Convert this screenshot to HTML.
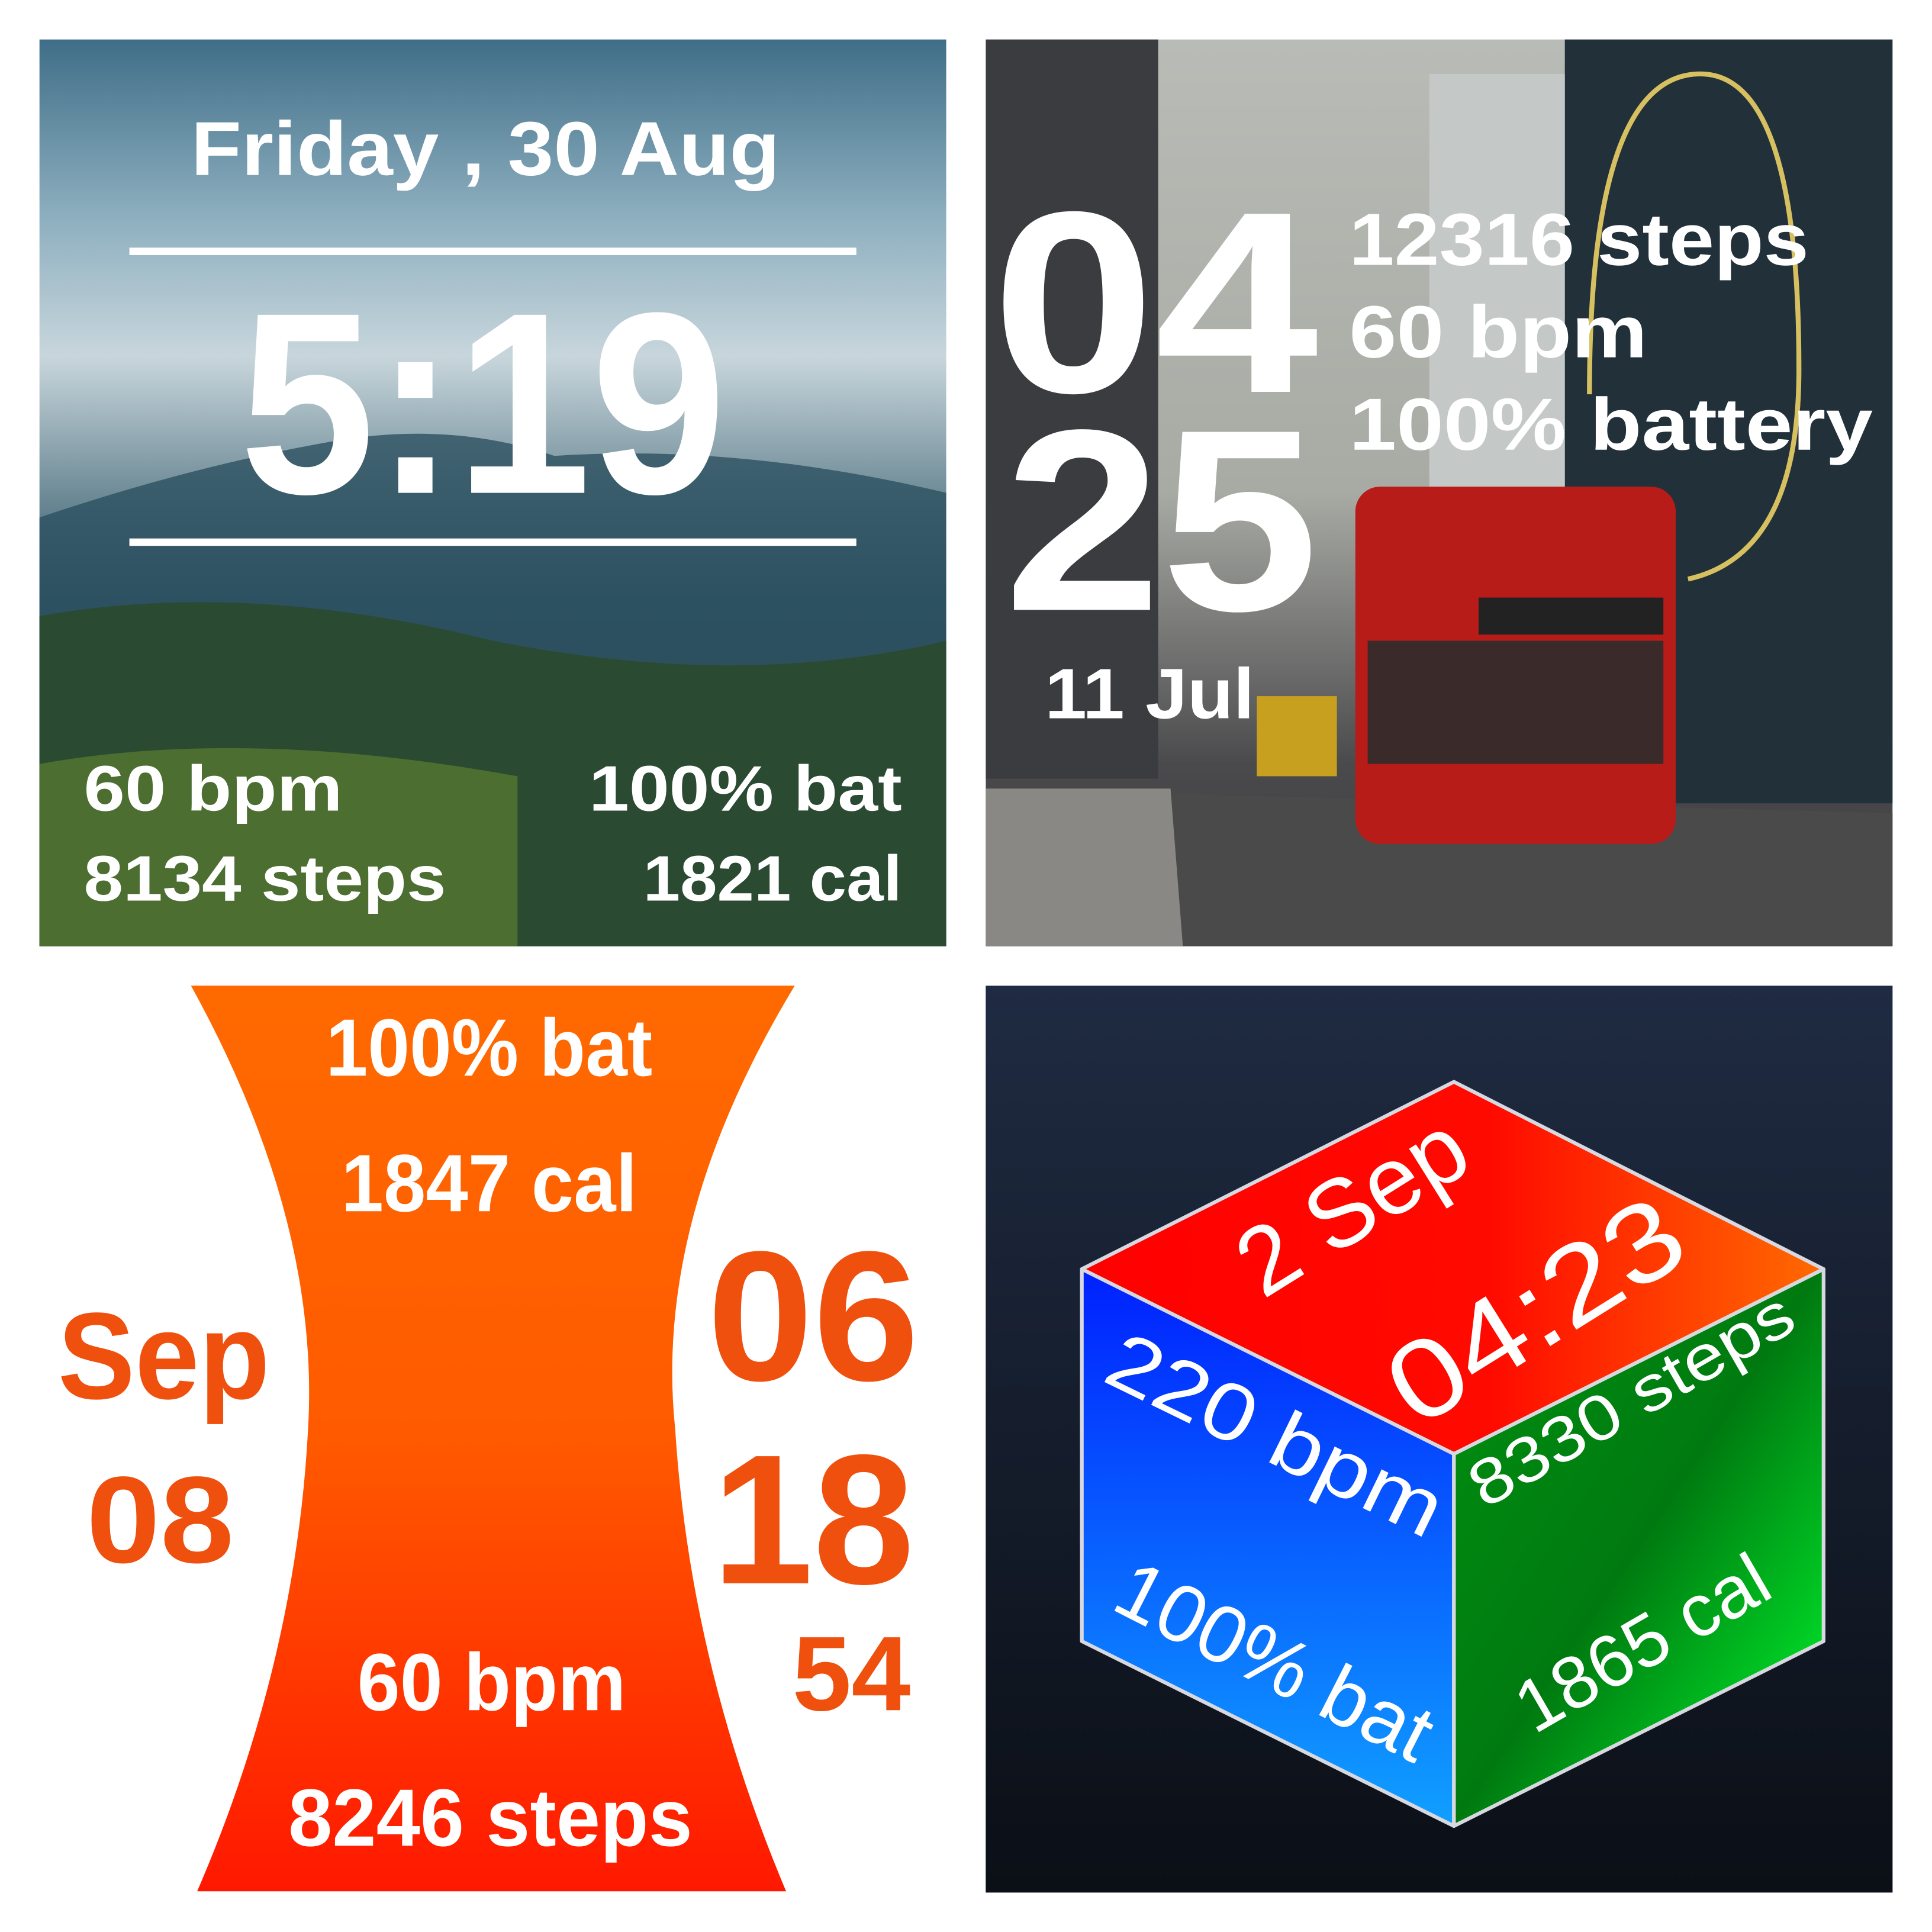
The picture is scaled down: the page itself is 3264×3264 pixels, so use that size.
<!DOCTYPE html>
<html><head><meta charset="utf-8"><style>
html,body{margin:0;padding:0;background:#fff;width:3264px;height:3264px;overflow:hidden}
svg{display:block}
text{font-family:"Liberation Sans","DejaVu Sans",sans-serif;}
</style></head><body>
<svg width="3264" height="3264" viewBox="0 0 1568 1568" xmlns="http://www.w3.org/2000/svg">
<defs>
<linearGradient id="sky" x1="0" y1="0" x2="0" y2="1">
<stop offset="0" stop-color="#3f6e88"/><stop offset="0.2" stop-color="#8fb0c0"/><stop offset="0.35" stop-color="#c8d6dc"/><stop offset="0.5" stop-color="#6f8c98"/><stop offset="0.62" stop-color="#2f5566"/><stop offset="0.8" stop-color="#2c4a3c"/><stop offset="1" stop-color="#2a4226"/></linearGradient>
<linearGradient id="street" x1="0" y1="0" x2="0" y2="1">
<stop offset="0" stop-color="#b9bcb6"/><stop offset="0.5" stop-color="#a8aaa4"/><stop offset="0.8" stop-color="#4a4a4c"/><stop offset="1" stop-color="#3a3a3c"/></linearGradient>
<linearGradient id="hg" x1="0" y1="0" x2="0" y2="1">
<stop offset="0" stop-color="#ff6a00"/><stop offset="0.5" stop-color="#ff5a00"/><stop offset="1" stop-color="#ff1800"/></linearGradient>
<linearGradient id="navy" x1="0" y1="0" x2="0" y2="1">
<stop offset="0" stop-color="#1f2b42"/><stop offset="1" stop-color="#0b0f16"/></linearGradient>
<linearGradient id="topf" x1="0" y1="0" x2="1" y2="0">
<stop offset="0" stop-color="#ff0000"/><stop offset="0.55" stop-color="#ff0a00"/><stop offset="1" stop-color="#ff6a00"/></linearGradient>
<linearGradient id="leftf" x1="0" y1="0" x2="0" y2="1">
<stop offset="0" stop-color="#0020ff"/><stop offset="1" stop-color="#10a0ff"/></linearGradient>
<linearGradient id="rightf" x1="0" y1="0" x2="1" y2="1">
<stop offset="0" stop-color="#009010"/><stop offset="0.5" stop-color="#007a10"/><stop offset="1" stop-color="#00ff30"/></linearGradient>
<clipPath id="c1"><rect x="32" y="32" width="736" height="736"/></clipPath>
<clipPath id="c2"><rect x="800" y="32" width="736" height="736"/></clipPath>
</defs>

<!-- TL -->
<g clip-path="url(#c1)">
<rect x="32" y="32" width="736" height="736" fill="url(#sky)"/>
<path d="M32 420 Q150 380 260 360 Q360 340 450 370 Q600 360 768 400 L768 768 L32 768Z" fill="#2c5060" opacity="0.8"/>
<path d="M32 500 Q200 470 400 520 Q600 560 768 520 L768 768 L32 768Z" fill="#2b4a32"/>
<path d="M32 620 Q200 590 420 630 L420 768 L32 768Z" fill="#4c6e30"/>
</g>
<g fill="#fff">
<text x="155" y="142" font-size="62" font-weight="bold" textLength="478" lengthAdjust="spacingAndGlyphs">Friday , 30 Aug</text>
<rect x="105" y="201" width="590" height="6"/>
<rect x="105" y="437" width="590" height="6"/>
<text x="392" y="400" font-size="210" font-weight="bold" text-anchor="middle" textLength="395" lengthAdjust="spacingAndGlyphs">5:19</text>
<text x="68" y="658" font-size="52" font-weight="bold" textLength="210" lengthAdjust="spacingAndGlyphs">60 bpm</text>
<text x="68" y="731" font-size="52" font-weight="bold" textLength="294" lengthAdjust="spacingAndGlyphs">8134 steps</text>
<text x="478" y="658" font-size="52" font-weight="bold" textLength="254" lengthAdjust="spacingAndGlyphs">100% bat</text>
<text x="522" y="731" font-size="52" font-weight="bold" textLength="210" lengthAdjust="spacingAndGlyphs">1821 cal</text>
</g>

<!-- TR -->
<g clip-path="url(#c2)">
<rect x="800" y="32" width="736" height="736" fill="url(#street)"/>
<rect x="800" y="32" width="140" height="600" fill="#3a3c40"/>
<rect x="1270" y="32" width="266" height="620" fill="#22303a"/>
<rect x="1160" y="60" width="110" height="380" fill="#c4c8c6"/>
<path d="M800 640 L1536 660 L1536 768 L800 768Z" fill="#4a4a4a"/>
<path d="M800 640 L950 640 L960 768 L800 768Z" fill="#8a8884"/>
<rect x="1100" y="395" width="260" height="290" rx="20" fill="#b81c18"/>
<rect x="1110" y="520" width="240" height="100" fill="#3a2a2a"/>
<rect x="1200" y="485" width="150" height="30" fill="#222"/>
<rect x="1020" y="565" width="65" height="65" fill="#c8a020"/>
<path d="M1290 320 Q1290 60 1380 60 Q1460 60 1460 300 Q1460 450 1370 470" fill="none" stroke="#d6c060" stroke-width="4"/>
</g>
<g fill="#fff" font-weight="bold">
<text x="805" y="318" font-size="210" textLength="265" lengthAdjust="spacingAndGlyphs">04</text>
<text x="815" y="495" font-size="210" textLength="255" lengthAdjust="spacingAndGlyphs">25</text>
<text x="1095" y="215" font-size="60" textLength="373" lengthAdjust="spacingAndGlyphs">12316 steps</text>
<text x="1095" y="290" font-size="60" textLength="242" lengthAdjust="spacingAndGlyphs">60 bpm</text>
<text x="1095" y="365" font-size="60" textLength="425" lengthAdjust="spacingAndGlyphs">100% battery</text>
<text x="848" y="583" font-size="58" textLength="170" lengthAdjust="spacingAndGlyphs">11 Jul</text>
</g>

<!-- BL -->
<path d="M155 800 L645 800 Q530 990 548 1160 Q560 1350 638 1535 L160 1535 Q240 1350 250 1160 Q260 990 155 800Z" fill="url(#hg)"/>
<g fill="#fff" font-weight="bold" text-anchor="middle">
<text x="397" y="873" font-size="66" textLength="265" lengthAdjust="spacingAndGlyphs">100% bat</text>
<text x="397" y="983" font-size="66" textLength="240" lengthAdjust="spacingAndGlyphs">1847 cal</text>
<text x="399" y="1388" font-size="66" textLength="218" lengthAdjust="spacingAndGlyphs">60 bpm</text>
<text x="398" y="1498" font-size="66" textLength="328" lengthAdjust="spacingAndGlyphs">8246 steps</text>
</g>
<g fill="#f0500e" font-weight="bold">
<text x="47" y="1135" font-size="100" textLength="172" lengthAdjust="spacingAndGlyphs">Sep</text>
<text x="70" y="1268" font-size="100" textLength="120" lengthAdjust="spacingAndGlyphs">08</text>
<text x="574" y="1120" font-size="150" textLength="172" lengthAdjust="spacingAndGlyphs">06</text>
<text x="578" y="1285" font-size="150" textLength="164" lengthAdjust="spacingAndGlyphs">18</text>
<text x="643" y="1388" font-size="86" textLength="96" lengthAdjust="spacingAndGlyphs">54</text>
</g>

<!-- BR -->
<rect x="800" y="800" width="736" height="736" fill="url(#navy)"/>
<g stroke="#d8d8e0" stroke-width="3" stroke-linejoin="round">
<path d="M1180 878 L1480 1030 L1180 1180 L878 1030Z" fill="url(#topf)"/>
<path d="M878 1030 L1180 1180 L1180 1482 L878 1332Z" fill="url(#leftf)"/>
<path d="M1180 1180 L1480 1030 L1480 1332 L1180 1482Z" fill="url(#rightf)"/>
</g>
<g fill="#fff" stroke="none">
<text transform="translate(1025 1055) rotate(-32)" font-size="78">2 Sep</text>
<text transform="translate(1150 1160) rotate(-32)" font-size="90" textLength="265" lengthAdjust="spacingAndGlyphs">04:23</text>
<text transform="translate(893 1120) rotate(26)" font-size="66" textLength="295" lengthAdjust="spacingAndGlyphs">220 bpm</text>
<text transform="translate(900 1305) rotate(27)" font-size="66">100% bat</text>
<text transform="translate(1205 1225) rotate(-30)" font-size="52" textLength="295" lengthAdjust="spacingAndGlyphs">8330 steps</text>
<text transform="translate(1245 1408) rotate(-30)" font-size="60">1865 cal</text>
</g>
</svg>
</body></html>
